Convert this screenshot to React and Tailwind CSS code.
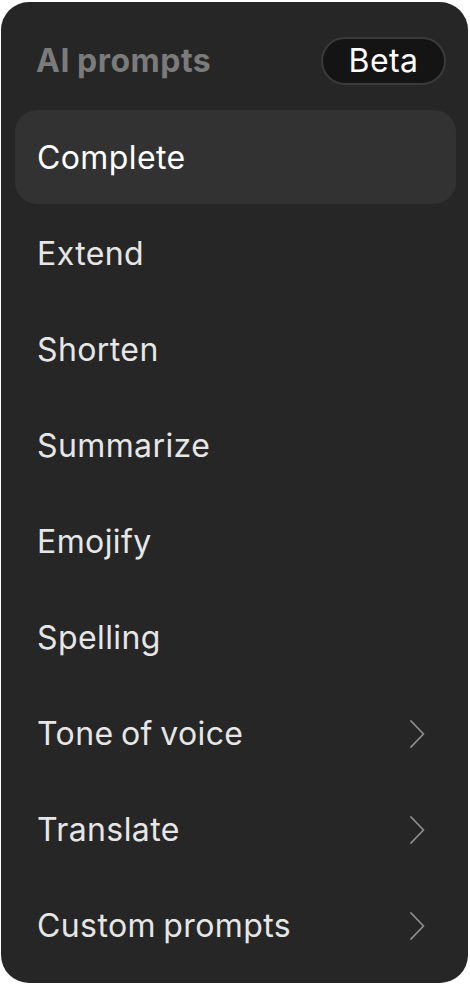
const items = [
    {label: "Complete", active: true},
    {label: "Extend"},
    {label: "Shorten"},
    {label: "Summarize"},
    {label: "Emojify"},
    {label: "Spelling"},
    {label: "Tone of voice", sub: true},
    {label: "Translate", sub: true},
    {label: "Custom prompts", sub: true},
];

function Chevron() {
    return (
        <svg width="16" height="28" viewBox="0 0 16 28" fill="none" className="text-[#8f8f8f]">
            <path d="M2 1 L14.5 14 L2 27" stroke="currentColor" strokeWidth="1.8" strokeLinecap="round" strokeLinejoin="round"/>
        </svg>
    );
}

export default function App() {
    return (
        <div className="min-h-screen bg-white pt-[2px] pl-[1px] font-['Inter',sans-serif]">
            <div className="w-[467px] h-[981px] rounded-[28px] bg-[#262626] pl-[14px] pr-[12px] flex flex-col">
                <div className="flex items-center justify-between h-[108px] pt-[10px] pl-[21px] pr-[10px]">
                    <span className="text-[32px] font-bold text-[#7b7b7b] tracking-[0.5px] [word-spacing:-1px]">AI prompts</span>
                    <span className="h-[48px] w-[125px] justify-center rounded-full bg-[#141414] border-2 border-[#3a3a3a] text-white text-[32px] tracking-[0.4px] flex items-center">
                        Beta
                    </span>
                </div>
                <div className="flex flex-col gap-[2px]">
                    {items.map(item => (
                        <div key={item.label}
                             className={"h-[94px] flex items-center justify-between rounded-[22px] pl-[22px] pr-[31px] pt-[2px] text-[32px] tracking-[0.4px] [word-spacing:-2px] " + (item.active ? "bg-[#323232] text-white" : "text-[#e6e6e6]")}>
                            <span>{item.label}</span>
                            {item.sub && <Chevron/>}
                        </div>
                    ))}
                </div>
            </div>
        </div>
    );
}
